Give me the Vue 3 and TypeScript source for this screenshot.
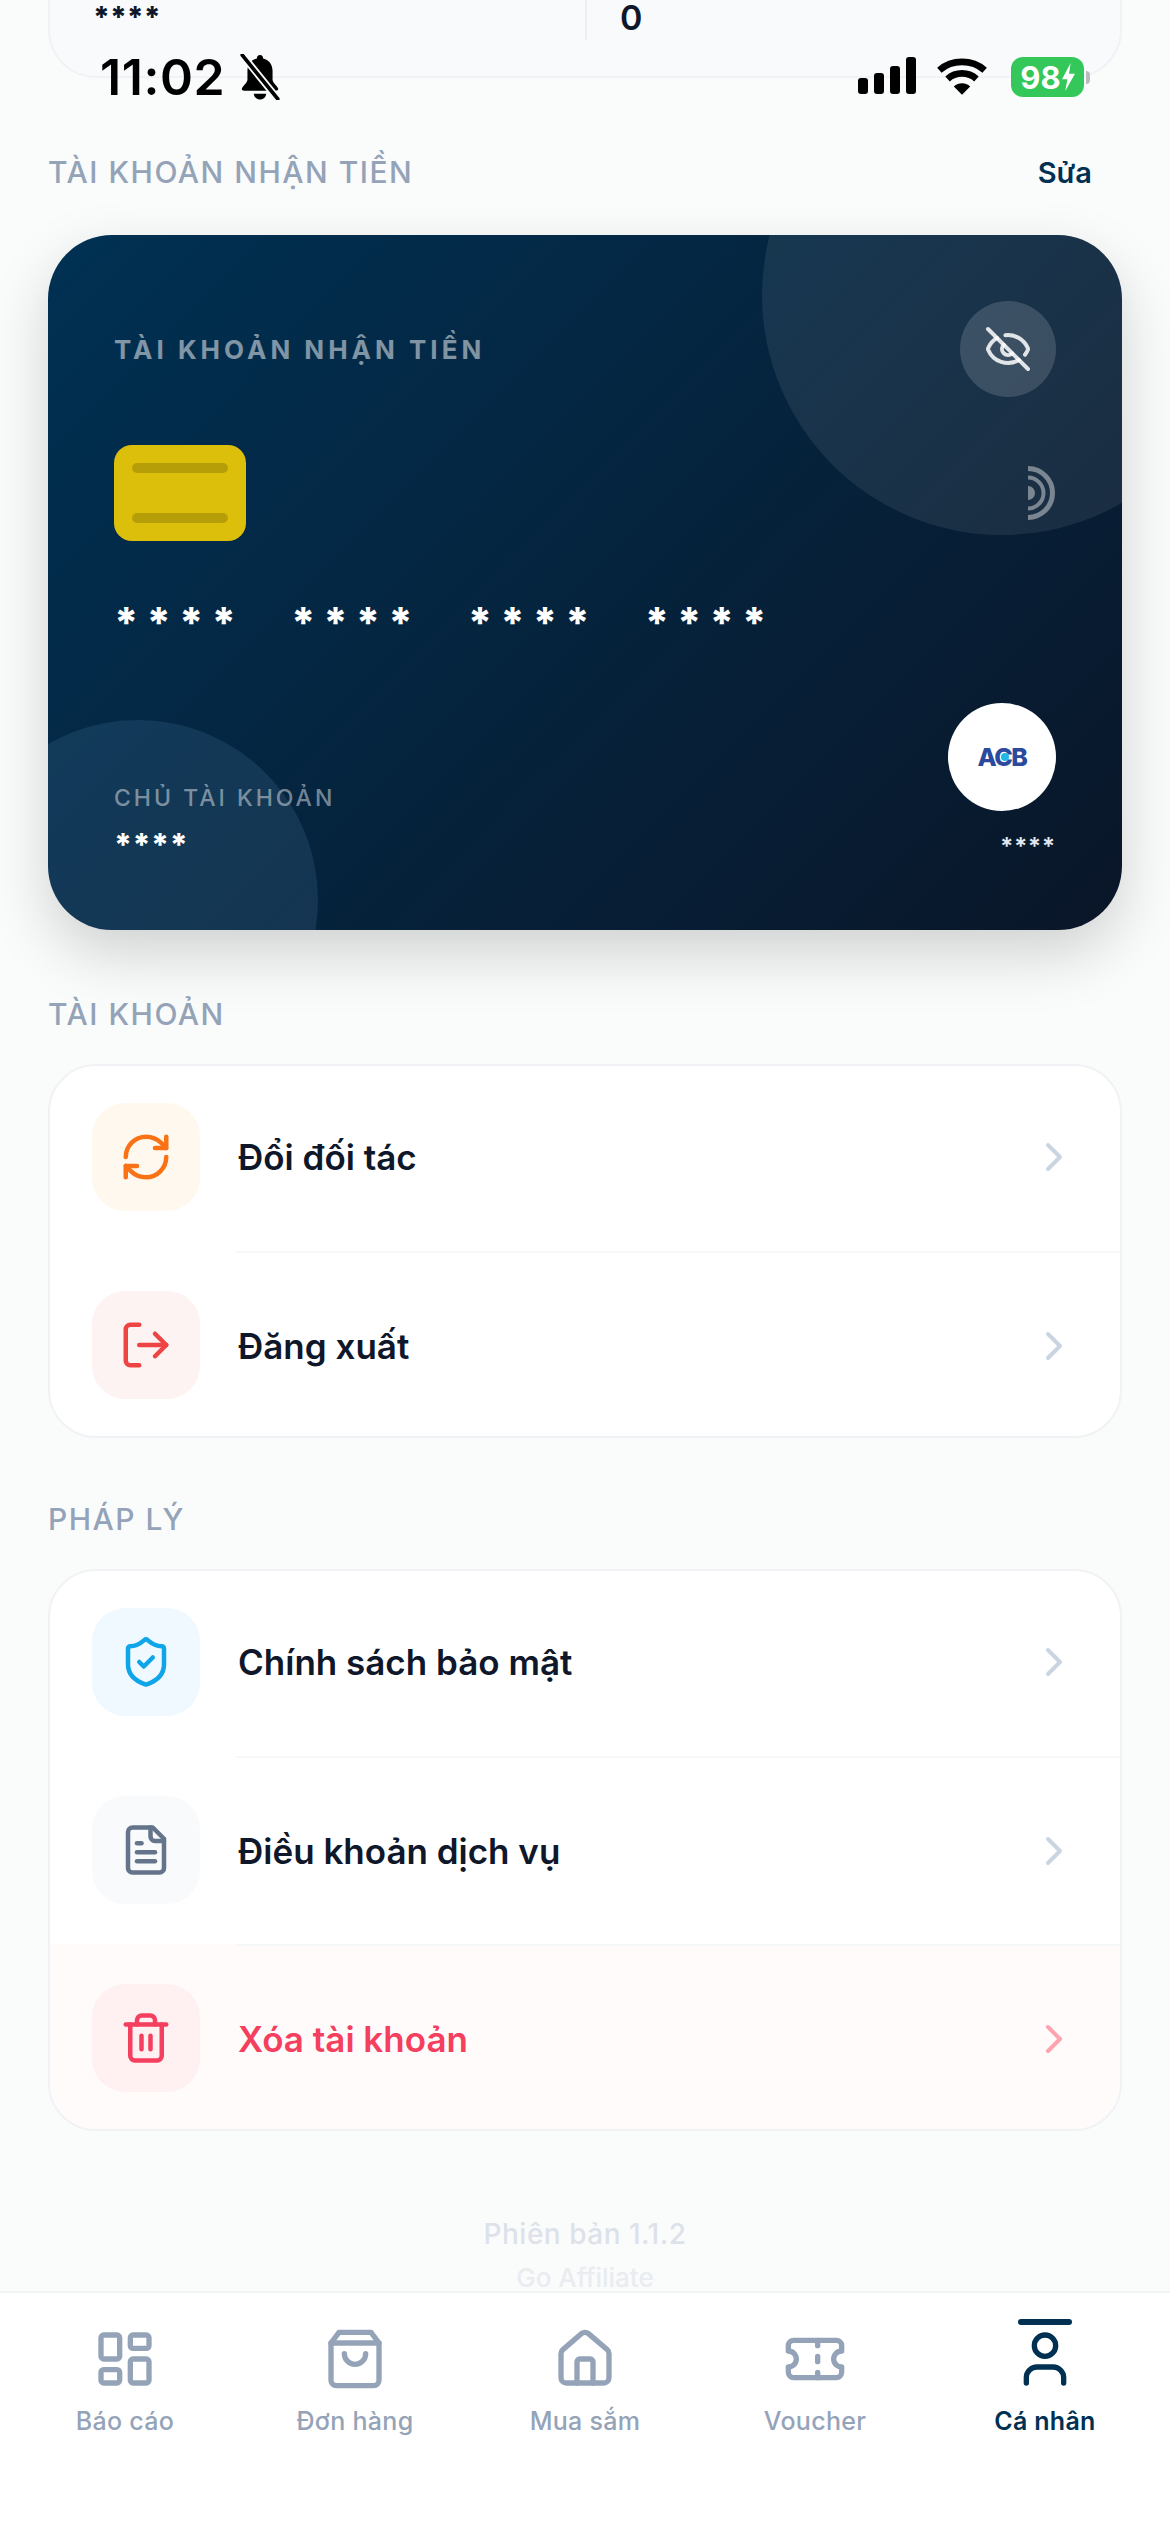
<script setup lang="ts">
interface Row { title: string; bg: string; color: string; paths: string[]; danger?: boolean }
interface Tab { label: string; paths: string[]; active?: boolean }

const accountRows: Row[] = [
  { title: 'Đổi đối tác', bg: '#fff8ee', color: '#f97316', paths: ['M3 12a9 9 0 0 1 9-9 9.75 9.75 0 0 1 6.74 2.74L21 8', 'M21 3v5h-5', 'M21 12a9 9 0 0 1-9 9 9.75 9.75 0 0 1-6.74-2.74L3 16', 'M8 16H3v5'] },
  { title: 'Đăng xuất', bg: '#fef3f3', color: '#ef4444', paths: ['M9 21H5a2 2 0 0 1-2-2V5a2 2 0 0 1 2-2h4', 'm16 17 5-5-5-5', 'M21 12H9'] },
]
const legalRows: Row[] = [
  { title: 'Chính sách bảo mật', bg: '#f0f9ff', color: '#0ea5e9', paths: ['M20 13c0 5-3.5 7.5-7.66 8.95a1 1 0 0 1-.67-.01C7.5 20.5 4 18 4 13V6a1 1 0 0 1 1-1c2 0 4.5-1.2 6.24-2.72a1.17 1.17 0 0 1 1.52 0C14.51 3.81 17 5 19 5a1 1 0 0 1 1 1z', 'm9 12 2 2 4-4'] },
  { title: 'Điều khoản dịch vụ', bg: '#f8fafc', color: '#64748b', paths: ['M15 2H6a2 2 0 0 0-2 2v16a2 2 0 0 0 2 2h12a2 2 0 0 0 2-2V7Z', 'M14 2v4a2 2 0 0 0 2 2h4', 'M10 9H8', 'M16 13H8', 'M16 17H8'] },
  { title: 'Xóa tài khoản', bg: '#fff1f2', color: '#f43f5e', danger: true, paths: ['M3 6h18', 'M19 6v14c0 1-1 2-2 2H7c-1 0-2-1-2-2V6', 'M8 6V4c0-1 1-2 2-2h4c1 0 2 1 2 2v2', 'M10 11v6', 'M14 11v6'] },
]
const tabs: Tab[] = [
  { label: 'Báo cáo', paths: ['M4 3h5a1 1 0 0 1 1 1v7a1 1 0 0 1-1 1H4a1 1 0 0 1-1-1V4a1 1 0 0 1 1-1Z', 'M15 3h5a1 1 0 0 1 1 1v3a1 1 0 0 1-1 1h-5a1 1 0 0 1-1-1V4a1 1 0 0 1 1-1Z', 'M15 12h5a1 1 0 0 1 1 1v7a1 1 0 0 1-1 1h-5a1 1 0 0 1-1-1v-7a1 1 0 0 1 1-1Z', 'M4 16h5a1 1 0 0 1 1 1v3a1 1 0 0 1-1 1H4a1 1 0 0 1-1-1v-3a1 1 0 0 1 1-1Z'] },
  { label: 'Đơn hàng', paths: ['M6 2 3 6v14a2 2 0 0 0 2 2h14a2 2 0 0 0 2-2V6l-3-4Z', 'M3 6h18', 'M16 10a4 4 0 0 1-8 0'] },
  { label: 'Mua sắm', paths: ['M15 21v-8a1 1 0 0 0-1-1h-4a1 1 0 0 0-1 1v8', 'M3 10a2 2 0 0 1 .709-1.528l7-5.999a2 2 0 0 1 2.582 0l7 5.999A2 2 0 0 1 21 10v9a2 2 0 0 1-2 2H5a2 2 0 0 1-2-2z'] },
  { label: 'Voucher', paths: ['M2 9a3 3 0 0 1 0 6v2a2 2 0 0 0 2 2h16a2 2 0 0 0 2-2v-2a3 3 0 0 1 0-6V7a2 2 0 0 0-2-2H4a2 2 0 0 0-2 2Z', 'M13 5v2', 'M13 17v2', 'M13 11v2'] },
  { label: 'Cá nhân', active: true, paths: ['M19 21v-2a4 4 0 0 0-4-4H9a4 4 0 0 0-4 4v2', 'M16 7a4 4 0 1 1-8 0 4 4 0 0 1 8 0Z'] },
]
const signalBars: number[] = [16, 21, 28, 37]
const groups: number[] = [1, 2, 3, 4]
</script>

<template>
  <div class="page">
    <div class="status">
      <div class="status-left">
        <span class="time">11:02</span>
        <svg class="bell" viewBox="0 0 40 44" width="42" height="46">
          <path d="M20 1c2 0 3 1.500 3 3.200 6 1.500 9 6 9 12v8c0 3 3 5 5 8 1 2 0 3-2 3H5c-2 0-3-1-2-3 2-3 5-5 5-8v-8c0-6 3-10.500 9-12C17 2.500 18 1 20 1Z" fill="#000" />
          <path d="M14 38h12c-.5 3.500-3 5.500-6 5.500S14.500 41.500 14 38Z" fill="#000" />
          <path d="M3 1 37 43" stroke="#f8fafb" stroke-width="7" />
          <path d="M3 1 37 43" stroke="#000" stroke-width="3.500" stroke-linecap="round" />
        </svg>
      </div>
      <div class="status-right">
        <div class="signal">
          <span v-for="h in signalBars" :key="h" class="signal-bar" :style="{ height: h + 'px' }"></span>
        </div>
        <svg class="wifi" viewBox="0 0 54 38" width="52" height="37" fill="none" stroke="#000" stroke-width="7">
          <path d="M3.500 12.500C16.500 1 37.500 1 50.500 12.500" />
          <path d="M12 21.500C20.500 14 33.500 14 42 21.500" />
          <path d="M27 38 18.500 29.500C23.500 25 30.500 25 35.500 29.500Z" fill="#000" stroke="none" />
        </svg>
        <div class="battery-wrap">
          <div class="battery">
            <span>98</span>
            <svg viewBox="0 0 12 26" width="13" height="28"><path d="M8 0 0 15h5l-2 11 9-16H6.500Z" fill="#fff" /></svg>
          </div>
          <span class="battery-nub"></span>
        </div>
      </div>
    </div>

    <main class="content">
      <section class="top-card">
        <div class="top-col"><span class="top-mask">****</span></div>
        <div class="top-col top-col-right"><span class="top-value">0</span></div>
      </section>

      <div class="section-head section-head-first">
        <span class="section-title">TÀI KHOẢN NHẬN TIỀN</span>
        <span class="edit">Sửa</span>
      </div>

      <section class="bank-card">
        <span class="blob blob-top"></span>
        <span class="blob blob-bottom"></span>
        <div class="bank-head">
          <span class="bank-label">TÀI KHOẢN NHẬN TIỀN</span>
          <span class="eye">
            <svg viewBox="0 0 24 24" width="48" height="48" fill="none" stroke="rgba(255,255,255,.85)" stroke-width="2" stroke-linecap="round" stroke-linejoin="round">
              <path d="M10.733 5.076a10.744 10.744 0 0 1 11.205 6.575 1 1 0 0 1 0 .696 10.747 10.747 0 0 1-1.444 2.49" />
              <path d="M14.084 14.158a3 3 0 0 1-4.242-4.242" />
              <path d="M17.479 17.499a10.75 10.75 0 0 1-15.417-5.151 1 1 0 0 1 0-.696 10.75 10.75 0 0 1 4.446-5.143" />
              <path d="m2 2 20 20" />
            </svg>
          </span>
        </div>
        <div class="chip-row">
          <div class="chip"><span></span><span></span></div>
          <svg class="nfc" viewBox="0 0 28 54" width="28" height="54" fill="none">
            <circle cx="0" cy="27" r="24.500" stroke="rgba(255,255,255,.42)" stroke-width="5" />
            <circle cx="0" cy="27" r="15.500" stroke="rgba(255,255,255,.42)" stroke-width="4" />
            <circle cx="0" cy="27" r="7" fill="rgba(255,255,255,.42)" />
          </svg>
        </div>
        <div class="number">
          <span v-for="g in groups" :key="g">****</span>
        </div>
        <div class="bank-foot">
          <div class="holder">
            <span class="holder-label">CHỦ TÀI KHOẢN</span>
            <span class="holder-name">****</span>
          </div>
          <div class="bank-side">
            <div class="logo"><span class="logo-text">ACB</span><i class="logo-dot"></i></div>
            <span class="acct">****</span>
          </div>
        </div>
      </section>

      <div class="section-head section-head-account"><span class="section-title">TÀI KHOẢN</span></div>
      <section class="list">
        <div class="rows">
          <div v-for="r in accountRows" :key="r.title" class="row">
            <span class="row-icon" :style="{ background: r.bg }">
              <svg viewBox="0 0 24 24" width="54" height="54" fill="none" :stroke="r.color" stroke-width="2" stroke-linecap="round" stroke-linejoin="round">
                <path v-for="p in r.paths" :key="p" :d="p" />
              </svg>
            </span>
            <span class="row-body">
              <span class="row-title">{{ r.title }}</span>
              <svg class="chev" viewBox="0 0 24 24" width="48" height="48" fill="none" stroke="#cbd5e1" stroke-width="2" stroke-linecap="round" stroke-linejoin="round"><path d="m9 18 6-6-6-6" /></svg>
            </span>
          </div>
        </div>
      </section>

      <div class="section-head section-head-legal"><span class="section-title">PHÁP LÝ</span></div>
      <section class="list">
        <div class="rows">
          <div v-for="r in legalRows" :key="r.title" class="row" :class="{ 'row-danger': r.danger }">
            <span class="row-icon" :style="{ background: r.bg }">
              <svg viewBox="0 0 24 24" width="54" height="54" fill="none" :stroke="r.color" stroke-width="2" stroke-linecap="round" stroke-linejoin="round">
                <path v-for="p in r.paths" :key="p" :d="p" />
              </svg>
            </span>
            <span class="row-body">
              <span class="row-title">{{ r.title }}</span>
              <svg class="chev" viewBox="0 0 24 24" width="48" height="48" fill="none" :stroke="r.danger ? '#fda4af' : '#cbd5e1'" stroke-width="2" stroke-linecap="round" stroke-linejoin="round"><path d="m9 18 6-6-6-6" /></svg>
            </span>
          </div>
        </div>
      </section>

      <div class="version">Phiên bản 1.1.2</div>
      <div class="brand">Go Affiliate</div>
    </main>

    <nav class="tabs">
      <div v-for="t in tabs" :key="t.label" class="tab" :class="{ 'tab-active': t.active }">
        <span class="tab-icon">
          <i v-if="t.active" class="tab-bar"></i>
          <svg viewBox="0 0 24 24" width="64" height="64" fill="none" :stroke="t.active ? '#003153' : '#94a3b8'" stroke-width="2" stroke-linecap="round" stroke-linejoin="round">
            <path v-for="p in t.paths" :key="p" :d="p" />
          </svg>
        </span>
        <span class="tab-label">{{ t.label }}</span>
      </div>
    </nav>
  </div>
</template>

<style scoped>
.page {
  position: relative;
  width: 1170px;
  height: 2532px;
  overflow: hidden;
  display: flex;
  flex-direction: column;
  background: #fafbfb;
  font-family: Inter, "Noto Sans", sans-serif;
  color: #0f172a;
}
.status {
  position: absolute;
  top: 52px;
  left: 100px;
  right: 80px;
  height: 50px;
  display: flex;
  justify-content: space-between;
  align-items: center;
  z-index: 5;
}
.status-left { display: flex; align-items: center; gap: 14px; }
.time { font-size: 50px; font-weight: 600; color: #000; letter-spacing: .6px; line-height: 50px; }
.bell { display: block; }
.status-right { display: flex; align-items: flex-end; gap: 20px; }
.signal { display: flex; align-items: flex-end; gap: 6px; margin-bottom: 3px; }
.signal-bar { width: 10px; background: #000; border-radius: 3px; }
.wifi { margin-bottom: 2px; }
.battery-wrap { display: flex; align-items: center; gap: 2px; margin-left: 3px; }
.battery {
  width: 73px;
  height: 40px;
  border-radius: 12px;
  background: #34c759;
  color: #fff;
  font-size: 31px;
  font-weight: 700;
  display: flex;
  align-items: center;
  justify-content: center;
  gap: 1px;
}
.battery-nub { width: 4px; height: 13px; background: #b9bcbe; border-radius: 0 4px 4px 0; }

.content {
  flex: 1;
  min-height: 0;
  overflow: hidden;
  padding: 0 48px;
  display: flex;
  flex-direction: column;
}
.top-card {
  flex: none;
  height: 76px;
  border: 2px solid #f0f2f5;
  border-top: 0;
  border-radius: 0 0 48px 48px;
  background: #f8fafc;
  display: grid;
  grid-template-columns: 1fr 1fr;
  align-items: start;
}
.top-col { height: 40px; padding-left: 43px; }
.top-col-right { border-left: 2px solid #eceff3; padding-left: 33px; }
.top-mask { display: block; font-size: 29px; font-weight: 800; line-height: 28px; margin-top: 3px; color: #0f172a; }
.top-value { display: block; font-size: 34px; font-weight: 600; line-height: 36px; color: #0f172a; }

.section-head { display: flex; justify-content: space-between; align-items: center; height: 36px; flex: none; }
.section-head-first { margin-top: 76px; margin-bottom: 45px; padding-right: 30px; }
.section-head-account { margin-top: 66px; margin-bottom: 32px; }
.section-head-legal { margin-top: 63px; margin-bottom: 32px; }
.section-title { font-size: 30px; font-weight: 500; letter-spacing: 1.500px; color: #94a3b8; }
.edit { font-size: 29px; font-weight: 600; color: #003153; }

.bank-card {
  position: relative;
  flex: none;
  height: 695px;
  border-radius: 64px;
  overflow: hidden;
  background: linear-gradient(135deg, #003153 0%, #0a1628 100%);
  box-shadow: 0 24px 60px rgba(0, 0, 0, .17);
  padding: 66px 66px 0;
  display: flex;
  flex-direction: column;
  box-sizing: border-box;
  color: #fff;
}
.blob { position: absolute; border-radius: 50%; background: rgba(255, 255, 255, .08); }
.blob-top { width: 480px; height: 480px; top: -180px; right: -120px; }
.blob-bottom { width: 360px; height: 360px; left: -90px; bottom: -150px; background: rgba(120, 180, 225, .13); }
.bank-head, .chip-row, .number, .bank-foot { position: relative; }
.bank-head { display: flex; justify-content: space-between; align-items: center; height: 96px; margin-bottom: 48px; }
.bank-label { font-size: 26px; font-weight: 700; letter-spacing: 4px; color: rgba(255, 255, 255, .5); }
.eye { width: 96px; height: 96px; border-radius: 50%; background: rgba(255, 255, 255, .15); display: flex; align-items: center; justify-content: center; }
.chip-row { display: flex; justify-content: space-between; align-items: center; height: 96px; }
.chip {
  width: 132px;
  height: 96px;
  border-radius: 18px;
  background: #dbbf0b;
  box-sizing: border-box;
  padding: 18px;
  display: flex;
  flex-direction: column;
  justify-content: space-between;
}
.chip span { height: 10px; border-radius: 5px; background: rgba(0, 0, 0, .17); }
.number { display: flex; gap: 47px; margin-top: 55px; height: 52px; align-items: center; font-size: 42px; font-weight: 800; letter-spacing: 8px; }
.bank-foot { display: flex; justify-content: space-between; align-items: flex-start; margin-top: 55px; }
.holder { display: flex; flex-direction: column; margin-top: 77px; }
.holder-label { font-size: 23px; font-weight: 500; letter-spacing: 3px; color: rgba(255, 255, 255, .45); line-height: 36px; }
.holder-name { font-size: 31px; font-weight: 800; letter-spacing: .5px; line-height: 36px; margin-top: 11px; }
.bank-side { display: flex; flex-direction: column; align-items: flex-end; }
.logo { position: relative; width: 108px; height: 108px; border-radius: 50%; background: #fff; display: flex; align-items: center; justify-content: center; }
.logo-text { font-size: 25px; font-weight: 800; color: #2b4a9e; letter-spacing: -1.500px; }
.logo-dot { position: absolute; left: 53px; top: 50px; width: 8px; height: 8px; border-radius: 50%; background: #22b8e6; }
.acct { font-size: 24px; font-weight: 600; color: #e2e8f0; letter-spacing: 1px; margin-top: 21px; line-height: 30px; }

.list {
  flex: none;
  border: 2px solid #f0f2f5;
  border-radius: 48px;
  background: #fff;
  overflow: hidden;
}
.rows { margin: -3px 0; }
.row { display: flex; align-items: stretch; height: 188px; padding-left: 42px; }
.row-icon { flex: none; width: 108px; height: 108px; border-radius: 33px; align-self: center; display: flex; align-items: center; justify-content: center; }
.row-body {
  flex: 1;
  margin-left: 36px;
  padding-right: 42px;
  padding-left: 2px;
  display: flex;
  align-items: center;
  justify-content: space-between;
}
.row + .row .row-body { border-top: 2px solid #f6f7f9; }
.row-title { font-size: 35px; font-weight: 600; color: #0f172a; }
.row-danger { background: #fffbfb; }
.row-danger .row-title { color: #f43f5e; }

.version { flex: none; margin-top: 85px; text-align: center; font-size: 28px; font-weight: 500; letter-spacing: .5px; color: #dde2ea; line-height: 36px; }
.brand { flex: none; margin-top: 8px; text-align: center; font-size: 26px; font-weight: 500; color: #e9ecf1; line-height: 36px; }

.tabs {
  flex: none;
  height: 241px;
  box-sizing: border-box;
  border-top: 2px solid #f1f3f5;
  background: #fff;
  display: grid;
  grid-template-columns: repeat(5, 230px);
  padding: 28px 10px 0;
}
.tab { display: flex; flex-direction: column; align-items: center; }
.tab-icon { position: relative; width: 64px; height: 64px; margin-top: 6px; display: flex; }
.tab-bar { position: absolute; left: 5px; top: -8px; width: 54px; height: 6px; border-radius: 3px; background: #003153; }
.tab-label { margin-top: 12px; font-size: 25px; font-weight: 500; letter-spacing: .3px; color: #94a3b8; line-height: 36px; }
.tab-active .tab-label { color: #003153; font-weight: 600; }
</style>
